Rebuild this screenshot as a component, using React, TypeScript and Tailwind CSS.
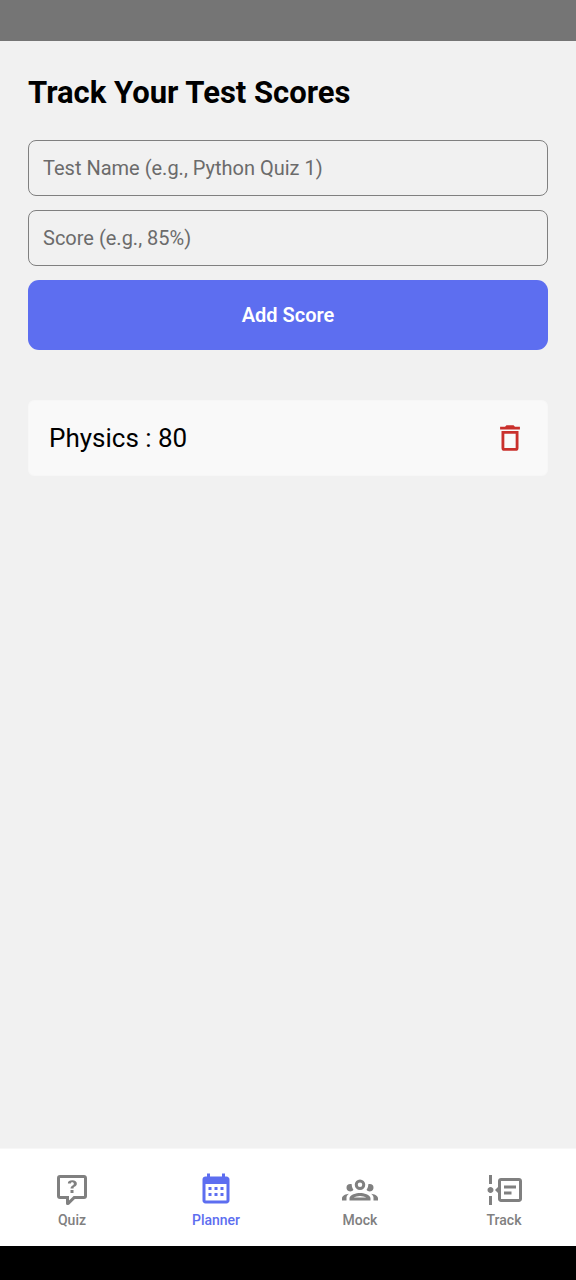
import { useState } from "react";
import type { FormEvent } from "react";

const icons = {
  quiz: "M4,2A2,2 0 0,0 2,4V16A2,2 0 0,0 4,18H8V21A1,1 0 0,0 9,22H9.5V22C9.75,22 10,21.9 10.2,21.71L13.9,18H20A2,2 0 0,0 22,16V4C22,2.89 21.1,2 20,2H4M4,4H20V16H13.08L10,19.08V16H4V4M12.19,5.5C11.3,5.5 10.59,5.68 10.05,6.04C9.5,6.4 9.22,7 9.27,7.69H11.24C11.24,7.41 11.34,7.2 11.5,7.06C11.7,6.92 11.92,6.85 12.19,6.85C12.5,6.85 12.77,6.93 12.95,7.11C13.13,7.28 13.22,7.5 13.22,7.8C13.22,8.08 13.14,8.33 13,8.54C12.83,8.76 12.62,8.94 12.36,9.08C11.84,9.4 11.5,9.68 11.29,9.92C11.1,10.16 11,10.5 11,11H13C13,10.72 13.05,10.5 13.14,10.32C13.23,10.15 13.4,10 13.66,9.85C14.12,9.64 14.5,9.36 14.79,9C15.08,8.63 15.23,8.24 15.23,7.8C15.23,7.1 14.96,6.54 14.42,6.12C13.88,5.71 13.13,5.5 12.19,5.5M11,12V14H13V12H11Z",
  planner:
    "M9 10V12H7V10H9M13 10V12H11V10H13M17 10V12H15V10H17M19 3C20.11 3 21 3.9 21 5V19C21 20.11 20.11 21 19 21H5C3.89 21 3 20.1 3 19V5C3 3.89 3.9 3 5 3H6V1H8V3H16V1H18V3H19M19 19V8H5V19H19M9 14V16H7V14H9M13 14V16H11V14H13M17 14V16H15V14H17Z",
  mock: "M12,5A3.5,3.5 0 0,0 8.5,8.5A3.5,3.5 0 0,0 12,12A3.5,3.5 0 0,0 15.5,8.5A3.5,3.5 0 0,0 12,5M12,7A1.5,1.5 0 0,1 13.5,8.5A1.5,1.5 0 0,1 12,10A1.5,1.5 0 0,1 10.5,8.5A1.5,1.5 0 0,1 12,7M5.5,8A2.5,2.5 0 0,0 3,10.5C3,11.44 3.53,12.25 4.29,12.68C4.65,12.88 5.06,13 5.5,13C5.94,13 6.35,12.88 6.71,12.68C7.08,12.47 7.39,12.17 7.62,11.81C6.89,10.86 6.5,9.7 6.5,8.5C6.5,8.41 6.5,8.31 6.5,8.22C6.2,8.08 5.86,8 5.5,8M18.5,8C18.14,8 17.8,8.08 17.5,8.22C17.5,8.31 17.5,8.41 17.5,8.5C17.5,9.7 17.11,10.86 16.38,11.81C16.5,12 16.63,12.15 16.78,12.3C16.94,12.45 17.1,12.58 17.29,12.68C17.65,12.88 18.06,13 18.5,13C18.94,13 19.35,12.88 19.71,12.68C20.47,12.25 21,11.44 21,10.5A2.5,2.5 0 0,0 18.5,8M12,14C9.66,14 5,15.17 5,17.5V19H19V17.5C19,15.17 14.34,14 12,14M4.71,14.55C2.78,14.78 0,15.76 0,17.5V19H3V17.07C3,16.06 3.69,15.22 4.71,14.55M19.29,14.55C20.31,15.22 21,16.06 21,17.07V19H24V17.5C24,15.76 21.22,14.78 19.29,14.55M12,16C13.53,16 15.24,16.5 16.23,17H7.77C8.76,16.5 10.47,16 12,16Z",
  track:
    "M4 2V8H2V2H4M2 22V16H4V22H2M5 12C5 13.11 4.11 14 3 14C1.9 14 1 13.11 1 12C1 10.9 1.9 10 3 10C4.11 10 5 10.9 5 12M24 6V18C24 19.11 23.11 20 22 20H10C8.9 20 8 19.11 8 18V14L6 12L8 10V6C8 4.89 8.9 4 10 4H22C23.11 4 24 4.89 24 6M10 6V18H22V6H10M12 9H20V11H12V9M12 13H17V15H12V13Z",
  trash:
    "M6,19A2,2 0 0,0 8,21H16A2,2 0 0,0 18,19V7H6V19M8,9H16V19H8V9M15.5,4L14.5,3H9.5L8.5,4H5V6H19V4H15.5Z",
};

function Icon({ name, className }: { name: keyof typeof icons; className: string }) {
  return (
    <svg viewBox="0 0 24 24" className={className} fill="currentColor" fillRule="evenodd" aria-hidden="true">
      <path d={icons[name]} />
    </svg>
  );
}

const tabs = [
  { label: "Quiz", icon: "quiz", active: false },
  { label: "Planner", icon: "planner", active: true },
  { label: "Mock", icon: "mock", active: false },
  { label: "Track", icon: "track", active: false },
] as const;

const fieldClass =
  "block h-14 w-full rounded-lg border border-[#808080] bg-transparent px-3.5 text-xl text-black placeholder:text-[#6b6b6b]";

export default function App() {
  const [scores, setScores] = useState([{ name: "Physics", score: "80" }]);
  const [name, setName] = useState("");
  const [score, setScore] = useState("");

  function addScore(event: FormEvent) {
    event.preventDefault();
    if (!name || !score) return;
    setScores([...scores, { name, score }]);
    setName("");
    setScore("");
  }

  return (
    <div className="flex min-h-screen flex-col bg-[#f1f1f1] font-[Roboto,sans-serif]">
      <div className="h-[41px] bg-[#757575]" />
      <main className="flex-1 px-7 pt-8">
        <h1 className="text-[31px] leading-10 font-bold text-black">Track Your Test Scores</h1>
        <form onSubmit={addScore} className="mt-[27px] flex flex-col gap-3.5">
          <input
            type="text"
            aria-label="Test name"
            placeholder="Test Name (e.g., Python Quiz 1)"
            value={name}
            onChange={(e) => setName(e.target.value)}
            className={fieldClass}
          />
          <input
            type="text"
            aria-label="Score"
            placeholder="Score (e.g., 85%)"
            value={score}
            onChange={(e) => setScore(e.target.value)}
            className={fieldClass}
          />
          <button type="submit" className="h-[70px] rounded-[11px] bg-[#5d6ef0] text-xl font-semibold text-white">
            Add Score
          </button>
        </form>
        <ul className="mt-[50px] flex flex-col gap-3.5">
          {scores.map((item, index) => (
            <li
              key={index}
              className="flex h-19 items-center justify-between rounded-md border border-[#f7f7f7] bg-[#f9f9f9] px-5"
            >
              <span className="text-[26px] text-black">
                {item.name} : {item.score}
              </span>
              <button
                type="button"
                aria-label={`Delete ${item.name}`}
                onClick={() => setScores(scores.filter((_, i) => i !== index))}
                className="text-[#c9302c]"
              >
                <Icon name="trash" className="size-[34px]" />
              </button>
            </li>
          ))}
        </ul>
      </main>
      <nav className="flex h-[98px] border-t border-[#f7f7f7] bg-white pt-[23px]">
        {tabs.map((tab) => (
          <a
            key={tab.label}
            href={`#${tab.label.toLowerCase()}`}
            aria-current={tab.active ? "page" : undefined}
            className={`flex flex-1 flex-col items-center gap-0.5 text-sm font-medium ${
              tab.active ? "text-[#5d6ef0]" : "text-[#808080]"
            }`}
          >
            <Icon name={tab.icon} className="size-9" />
            {tab.label}
          </a>
        ))}
      </nav>
      <div className="h-[34px] bg-black" />
    </div>
  );
}
